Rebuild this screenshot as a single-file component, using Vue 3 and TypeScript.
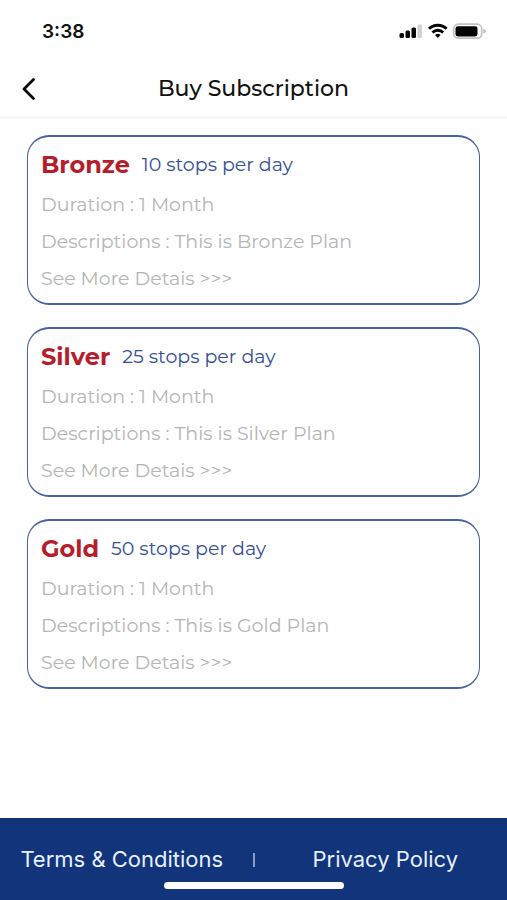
<script setup lang="ts">
interface Plan {
  name: string
  stops: number
  duration: string
}

const plans: Plan[] = [
  { name: 'Bronze', stops: 10, duration: '1 Month' },
  { name: 'Silver', stops: 25, duration: '1 Month' },
  { name: 'Gold', stops: 50, duration: '1 Month' },
]
</script>

<template>
  <div class="screen">
    <div class="status">
      <span class="time">3:38</span>
      <svg class="indicators" width="88" height="18" viewBox="0 0 88 18" aria-hidden="true">
        <g fill="#050505">
          <rect x="0.5" y="11" width="4.5" height="5" rx="1.5" />
          <rect x="6.5" y="8.5" width="4.5" height="7.5" rx="1.5" />
          <rect x="12.5" y="5.5" width="4.5" height="10.5" rx="1.5" />
        </g>
        <rect x="18.5" y="2.5" width="4.5" height="13.5" rx="1.5" fill="#d2d2d2" />
        <g fill="none" stroke="#050505" stroke-width="2.8">
          <path d="M30 6.800a12.700 12.700 0 0 1 17.600 0" />
          <path d="M33.400 10.400a7.900 7.900 0 0 1 10.800 0" />
        </g>
        <path d="M36.100 13a4 4 0 0 1 5.400 0L38.800 16z" fill="#050505" />
        <rect x="54.7" y="2.2" width="28" height="14" rx="4.5" fill="#fff" stroke="#c4c4c4" stroke-width="1.8" />
        <rect x="56.5" y="4.2" width="22" height="10.3" rx="2.4" fill="#050505" />
        <path d="M84.300 6.800q2.600.8 2.600 2.400t-2.600 2.400z" fill="#bdbdbd" />
      </svg>
    </div>

    <header class="nav">
      <button class="back" type="button" aria-label="Back">
        <svg width="14" height="24" viewBox="0 0 14 24" aria-hidden="true">
          <path d="M11.500 2.500 2 12l9.500 9.500" fill="none" stroke="#080808" stroke-width="2.8" stroke-linecap="round" stroke-linejoin="round" />
        </svg>
      </button>
      <h1>Buy Subscription</h1>
    </header>

    <main class="plans">
      <article v-for="plan in plans" :key="plan.name" class="card">
        <div class="heading">
          <h2>{{ plan.name }}</h2>
          <span class="stops">{{ plan.stops }} stops per day</span>
        </div>
        <p>Duration : {{ plan.duration }}</p>
        <p>Descriptions : This is {{ plan.name }} Plan</p>
        <a class="more" href="#">See More Detais &gt;&gt;&gt;</a>
      </article>
    </main>

    <footer class="footer">
      <nav class="links">
        <a href="#">Terms &amp; Conditions</a>
        <span class="divider"></span>
        <a href="#">Privacy Policy</a>
      </nav>
      <div class="home"></div>
    </footer>
  </div>
</template>

<style>
body {
  margin: 0;
  background: #fefefe;
}
</style>

<style scoped>
.screen {
  display: flex;
  flex-direction: column;
  min-height: 100vh;
  font-family: Montserrat, Inter, sans-serif;
}

.status {
  display: flex;
  align-items: center;
  justify-content: space-between;
  height: 62px;
  padding: 0 20px 0 42px;
}

.time {
  font-family: Inter, sans-serif;
  font-size: 19px;
  font-weight: 600;
  color: #111;
}

.nav {
  display: grid;
  grid-template-columns: 48px 1fr 48px;
  align-items: center;
  height: 54px;
  border-bottom: 3px solid #f6f6f6;
}

.back {
  display: flex;
  padding: 8px 0 8px 22px;
  border: 0;
  background: none;
  cursor: pointer;
}

h1 {
  margin: 0;
  font-size: 22px;
  font-weight: 500;
  line-height: 28px;
  text-align: center;
  color: #111;
}

.plans {
  display: flex;
  flex: 1;
  flex-direction: column;
  gap: 22px;
  padding: 16px 27px 24px;
}

.card {
  padding: 5px 13px 6px;
  border: solid #4561a0;
  border-width: 2px 1px;
  border-radius: 22px;
}

.heading {
  display: flex;
  align-items: center;
  gap: 12px;
  height: 44px;
}

h2 {
  margin: 0;
  font-size: 24px;
  font-weight: 700;
  color: #b51d2c;
}

.stops {
  font-size: 19px;
  color: #344f98;
}

p,
.more {
  display: block;
  margin: 0;
  font-size: 19px;
  line-height: 37px;
  color: #b5b5b5;
  text-decoration: none;
}

.footer {
  display: flex;
  flex-direction: column;
  align-items: center;
  gap: 6px;
  padding: 25px 0 11px;
  background: #12347a;
}

.links {
  display: grid;
  grid-template-columns: 1fr 20px 1fr;
  align-items: center;
  justify-items: center;
  width: 100%;
}

.links a {
  font-family: Inter, sans-serif;
  font-size: 22px;
  line-height: 33px;
  color: #e6efff;
  text-decoration: none;
}

.divider {
  width: 2px;
  height: 14px;
  background: #8b9dc8;
}

.home {
  width: 180px;
  height: 7px;
  border-radius: 4px;
  background: #fff;
}
</style>
